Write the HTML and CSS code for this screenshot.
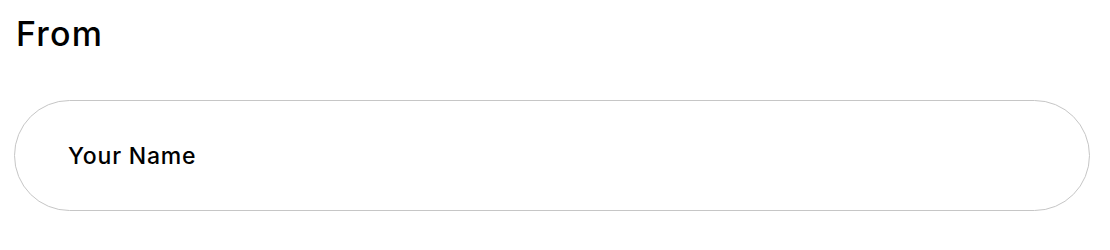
FILE: index.html
```html
<!DOCTYPE html>
<html lang="en">
<head>
<meta charset="utf-8">
<title>From</title>
<link rel="stylesheet" href="styles.css">
</head>
<body>
<section class="field">
  <h2 class="field-title">From</h2>
  <div class="pill-input">Your Name</div>
</section>
</body>
</html>
```

FILE: styles.css
```css
html, body {
  margin: 0;
  padding: 0;
  background: #ffffff;
}
body {
  font-family: Inter, "Liberation Sans", Arial, sans-serif;
  color: #000000;
}
.field {
  padding: 14px 20px 0 14px;
}
.field-title {
  margin: 0 0 0 2px;
  font-size: 34px;
  font-weight: 500;
  line-height: 40px;
  letter-spacing: 1.2px;
}
.pill-input {
  margin-top: 46px;
  box-sizing: border-box;
  height: 111px;
  border: 1px solid #c6c6c6;
  border-radius: 56px;
  display: flex;
  align-items: center;
  padding-left: 53px;
  font-size: 23px;
  font-weight: 500;
  letter-spacing: 0.8px;
}
```
